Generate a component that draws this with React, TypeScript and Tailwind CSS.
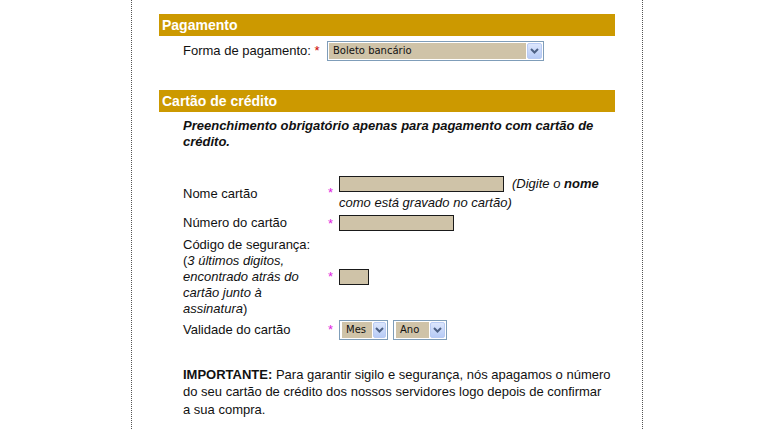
import React from "react";

const gold = "bg-[#CC9900]";

function Chevron() {
  return (
    <svg width="9" height="6" viewBox="0 0 9 6" className="block">
      <polyline points="1,1 4.5,4.5 8,1" fill="none" stroke="#4D6185" strokeWidth="2" />
    </svg>
  );
}

function FakeSelect({ width, text, tan, full }: { width: string; text: string; tan: string; full?: boolean }) {
  return (
    <div className={`flex h-[20px] ${width} items-stretch border border-[#7F9DB9] bg-white p-[1px]`}>
      <div className={`flex flex-1 items-center ${full ? "" : "pl-[1px]"}`}>
        <span className={`${tan} flex h-full items-center bg-[#CFC3A8] pl-[4px] text-[10px] text-[#111] [font-family:'DejaVu_Sans',sans-serif]`}>
          {text}
        </span>
      </div>
      <div className="ml-[1px] flex w-[16px] items-center justify-center rounded-[2px] border border-[#B9CBF3] bg-gradient-to-b from-[#DCE6FC] to-[#B7CBF6]">
        <Chevron />
      </div>
    </div>
  );
}

function TanInput({ width }: { width: string }) {
  return <div className={`h-[16px] ${width} border border-[#1a1a1a] bg-[#CFC3A8]`} />;
}

function Star() {
  return <span className="w-[12px] shrink-0 pl-[1px] text-[13px] leading-none text-[#E020E0]">*</span>;
}

export default function App() {
  return (
    <div className="h-[429px] w-full overflow-hidden bg-white text-[13px] text-[#111] [font-family:'Liberation_Sans',Arial,sans-serif]">
      <div className="ml-[131px] h-full w-[512px] border-x border-dotted border-[#555] pl-[27px] pt-[14px]">
        {/* Pagamento */}
        <div className={`${gold} h-[22px] w-[456px] pl-[3px] text-[14px] font-bold leading-[22px] text-white`}>
          Pagamento
        </div>
        <div className="mt-[5px] flex h-[19px] items-center pl-[24px]">
          <span className="w-[144px] shrink-0 whitespace-nowrap">
            Forma de pagamento: <span className="text-[#CC0000]">*</span>
          </span>
          <FakeSelect width="w-[217px]" text="Boleto bancário" tan="w-[197px]" full />
        </div>

        {/* Cartão de crédito */}
        <div className={`${gold} mt-[30px] h-[22px] w-[456px] pl-[3px] text-[14px] font-bold leading-[22px] text-white`}>
          Cartão de crédito
        </div>
        <p className="mt-[6px] w-[440px] pl-[24px] font-bold italic leading-[16px]">
          Preenchimento obrigatório apenas para pagamento com cartão de crédito.
        </p>

        <div className="mt-[24px] pl-[24px]">
          <div className="flex items-center">
            <span className="w-[144px] shrink-0 pt-[2px]">Nome cartão</span>
            <Star />
            <div className="flex flex-col">
              <div className="flex items-center">
                <TanInput width="w-[165px]" />
                <span className="ml-[8px] italic">
                  (Digite o <b>nome</b>
                </span>
              </div>
              <span className="mt-[1px] leading-[16px] italic">como está gravado no cartão)</span>
            </div>
          </div>

          <div className="mt-[4px] flex h-[17px] items-center">
            <span className="w-[144px] shrink-0">Número do cartão</span>
            <Star />
            <TanInput width="w-[115px]" />
          </div>

          <div className="mt-[5px] flex items-center">
            <span className="w-[144px] shrink-0 leading-[16px]">
              Código de segurança:
              <br />
              (<i>3 últimos digitos,</i>
              <br />
              <i>encontrado atrás do</i>
              <br />
              <i>cartão junto à</i>
              <br />
              <i>assinatura</i>)
            </span>
            <Star />
            <TanInput width="w-[30px]" />
          </div>

          <div className="mt-[3px] flex h-[20px] items-center">
            <span className="w-[144px] shrink-0">Validade do cartão</span>
            <Star />
            <div className="flex gap-[5px]">
              <FakeSelect width="w-[49px]" text="Mes" tan="w-[30px]" />
              <FakeSelect width="w-[54px]" text="Ano" tan="w-[33px]" />
            </div>
          </div>

          <p className="mt-[26px] whitespace-nowrap leading-[17.5px]">
            <b>IMPORTANTE:</b> Para garantir sigilo e segurança, nós apagamos o número
            <br />
            do seu cartão de crédito dos nossos servidores logo depois de confirmar
            <br />a sua compra.
          </p>
        </div>
      </div>
    </div>
  );
}
